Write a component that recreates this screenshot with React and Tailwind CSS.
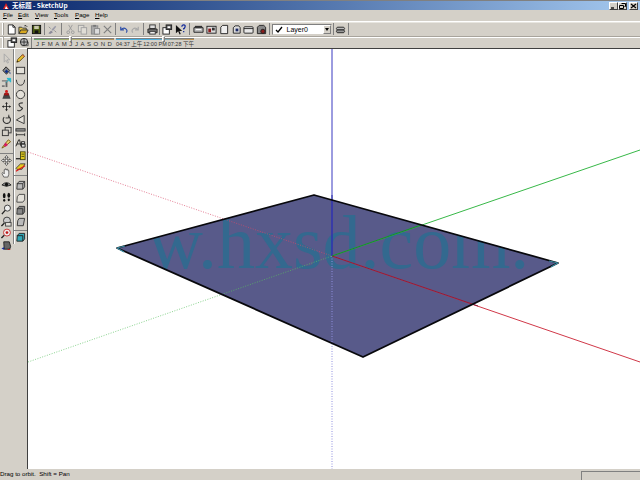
import React from 'react';

const I = ({ children }) => (
  <svg viewBox="0 0 12 12" className="w-[11px] h-[11px]" fill="none" strokeWidth="1">
    {children}
  </svg>
);

const icons = {
  // main toolbar
  doc: <><path d="M2.500 1h5l2.500 2.500v7.500h-7.500z" fill="#fff" stroke="#222" /><path d="M7.500 1v2.500h2.500" stroke="#222" /></>,
  open: <><path d="M1 10.500v-7h3l1 1h4v2" fill="#e8c84a" stroke="#333" /><path d="M1 10.500l2-4h8l-2 4z" fill="#d8a820" stroke="#333" /><path d="M7 2q2-1 3 1" stroke="#222" /></>,
  save: <><rect x="1.500" y="1.500" width="9" height="9" fill="#4a5a10" stroke="#111" /><rect x="3.500" y="2" width="5" height="3.500" fill="#c8c8a8" /><rect x="4" y="7" width="4" height="3" fill="#111" /></>,
  paint2: <><path d="M1.500 10l3-3 2 2-3 2z" fill="#8a8a98" /><path d="M5 6l4-4 1 1-3.500 4.500z" fill="#9a9aa8" /><path d="M2 3l2 2M8 7l2 2" stroke="#8a8a8a" /></>,
  cut: <><path d="M4 1l3.500 6M8 1l-3.500 6" stroke="#9a9a9a" /><circle cx="3.500" cy="9" r="1.500" stroke="#9a9a9a" /><circle cx="8.500" cy="9" r="1.500" stroke="#9a9a9a" /></>,
  copy: <><rect x="1.500" y="1.500" width="6" height="7" fill="#e0ddd6" stroke="#a0a0a0" /><rect x="4.500" y="4" width="6" height="7" fill="#e0ddd6" stroke="#a0a0a0" /></>,
  paste: <><rect x="1.500" y="2" width="7" height="9" fill="#a8a8a8" stroke="#888" /><rect x="5" y="5" width="5.500" height="6" fill="#ddd" stroke="#888" /><rect x="3.500" y="1" width="3" height="2" fill="#777" /></>,
  del: <path d="M2 2l8 8M10 2l-8 8" stroke="#808080" strokeWidth="1.300" />,
  undo: <path d="M3 3v3.500h3.500M3.200 6.300q3-3 5.300-1t.5 4" stroke="#3050a8" strokeWidth="1.300" />,
  redo: <path d="M9 3v3.500h-3.500M8.800 6.300q-3-3-5.300-1t-.5 4" stroke="#a8a8a8" strokeWidth="1.300" />,
  print: <><rect x="3" y="1" width="6" height="4" fill="#ddd" stroke="#333" /><path d="M1 5.500h10v4h-10z" fill="#777" stroke="#222" /><rect x="3" y="8" width="6" height="3" fill="#eee" stroke="#333" /></>,
  info: <><rect x="1" y="4" width="7" height="7" fill="#fff" stroke="#222" /><rect x="4.500" y="1" width="6" height="5" fill="#555" stroke="#222" /><rect x="6" y="2.500" width="3" height="2" fill="#fff" /></>,
  help: <><path d="M1 1v9l2.500-2 1.500 3.500 1.300-.5-1.500-3.500h3z" fill="#111" /><path d="M7.500 3q0-2 2-2t1.500 2-1.500 2v1M9.500 7.500v1.500" stroke="#10289a" strokeWidth="1.300" /></>,
  iso: <><path d="M1 4h10v5h-10z" fill="#bbb" stroke="#222" /><path d="M3 6h6" stroke="#fff" /><path d="M2 2h8v2h-8z" fill="#333" /></>,
  top: <><rect x="1" y="2.500" width="10" height="7.500" fill="#ddd" stroke="#222" /><rect x="2.500" y="5" width="3" height="4" fill="#8a1c1c" /><rect x="6.500" y="4" width="3" height="3" fill="#333" /></>,
  front: <path d="M3 10.500v-7l2-2h5.500v9z" fill="#eee" stroke="#222" />,
  right: <><path d="M2.500 10v-6l2-2h4l1.500 2v6z" fill="#ddd" stroke="#222" /><rect x="5" y="5" width="3" height="3" fill="#1c2a66" /></>,
  back: <><rect x="1" y="3" width="10" height="7" rx="1" fill="#e8e8e8" stroke="#222" /><path d="M1 5h10" stroke="#222" /></>,
  left: <><path d="M1.500 10.500v-7l2-2h5l2 2v7z" fill="#888" stroke="#222" /><circle cx="7.500" cy="8" r="2.300" fill="#8a1c1c" stroke="#222" /></>,
  layers: <><path d="M2.500 3.500h7l1 1.500-1 1.500h-7l-1-1.500z" fill="#bbb" stroke="#222" /><path d="M2.500 6.500h7l1 1.500-1 1.500h-7l-1-1.500z" fill="#999" stroke="#222" /></>,
  globe: <><path d="M3 9.500h7v-4l-1-1" stroke="#555" /><circle cx="5.500" cy="5.500" r="4" fill="#bbb" stroke="#222" /><path d="M5.500 1.500v8M1.500 5.500h8" stroke="#333" /></>,
  // left toolbar
  select: <path d="M3.500 1v9l2-2 1.500 3 1.200-.6-1.500-3h3z" fill="#d4d0c8" stroke="#a8a8a8" />,
  pencil: <><path d="M2 10l1-3 5.500-5.500 2 2-5.500 5.500z" fill="#e8c030" stroke="#6a5010" /><path d="M8 2l2 2" stroke="#d03050" /><path d="M2 10l1.500-.8-.7-.7z" fill="#111" /></>,
  bucket: <><path d="M2 6l3.500-4 4 4-3.500 4z" fill="#888" stroke="#222" /><path d="M4 7l2-2 2 2-2 2z" fill="#10308a" /><path d="M9.500 7q1.500 2 .5 3-1.500-1-.5-3" fill="#10308a" /></>,
  rect: <rect x="1.500" y="2.500" width="9" height="7" fill="#e4e1da" stroke="#333" />,
  push: <><path d="M1 3.500h7v1.500h-7zM1 9h3v2h-3z" fill="#777" /><path d="M6 5v6" stroke="#666" strokeWidth="2" /><path d="M5.500 6l4-4M6.500 1.500h4v4z" fill="#20b8d0" stroke="#20b8d0" /></>,
  arc: <path d="M1.500 3q.5 6 4.500 6t4.500-6" stroke="#333" />,
  eraser: <><path d="M1.500 10.500l1.500-4h6l1.500 4z" fill="#444" /><path d="M3.500 6.500a2.500 2.500 0 0 1 5 0z" fill="#c81818" stroke="#801010" /><circle cx="6" cy="2.500" r="1.500" fill="#d81818" /></>,
  circle: <circle cx="6" cy="6" r="4.500" fill="#e4e1da" stroke="#333" />,
  move: <path d="M6 1l1.500 2h-1v2.500h2.500v-1l2 1.500-2 1.500v-1h-2.500v2.500h1l-1.500 2-1.500-2h1v-2.500h-2.500v1l-2-1.500 2-1.500v1h2.500v-2.500h-1z" fill="#222" transform="translate(0 .1)" />,
  free: <path d="M8.500 2q-5 0-4 2.500t3 3-2 3q-1 .3-3-.5" stroke="#333" strokeWidth="1.200" />,
  rotate: <><path d="M3.500 3.500a4 4 0 1 0 4.500-.8" stroke="#333" strokeWidth="1.200" /><path d="M8.500 .8v3.500h-3.500" stroke="#333" /></>,
  polygon: <path d="M10 1.500v9l-8.500-4z" fill="#e4e1da" stroke="#333" />,
  offset: <><rect x="4.500" y="1.500" width="6.500" height="6" stroke="#333" /><rect x="1.500" y="4.500" width="6.500" height="6" fill="#d4d0c8" stroke="#333" /></>,
  tape: <><rect x="1" y="3" width="10" height="2.500" fill="#999" stroke="#333" /><path d="M1.500 8v3M10.500 8v3M1.500 9.500h9" stroke="#333" /></>,
  brush: <><path d="M1 11l2-3 5-6 2.500 2-6 5z" fill="#e8d070" stroke="#7a5a10" /><path d="M5 5l2.500 2.500L5 9.500 3 8z" fill="#d81860" /></>,
  text: <><path d="M1 9l3-7h1l1.500 7M2 6.500h4" stroke="#222" /><path d="M7 4h3.500v2.500h-3.500zM7 6.500h4v3.500h-4z" stroke="#222" fill="#ddd" /></>,
  key: <><path d="M1 9.500h5" stroke="#333" strokeWidth="1.500" /><rect x="6" y="2" width="5" height="8.500" fill="#e0c820" stroke="#4a4a10" /><path d="M7 4.500h3M7 7h3" stroke="#4a4a10" /></>,
  plane: <><path d="M1 7l5-5h5l-3.500 6h-5.500z" fill="#e8c820" stroke="#444" /><path d="M1 10l10-6" stroke="#d81818" strokeWidth="1.300" /></>,
  orbit: <path d="M6 .5l1.800 2.300h-1.200v2.600h2.600v-1.200l2.300 1.800-2.300 1.800v-1.200h-2.600v2.600h1.200l-1.800 2.300-1.800-2.300h1.200v-2.600h-2.600v1.200l-2.300-1.800 2.300-1.800v1.200h2.600v-2.600h-1.200z" fill="#fff" stroke="#222" strokeWidth=".7" />,
  hand: <path d="M3 11l-2-4 1-1 1.500 1.500v-4.500h1v-1h1v1h1v-.5h1v1.500h1v4l-1 3z" fill="#eee" stroke="#444" strokeWidth=".8" />,
  eye: <><path d="M1 6.500q5-5 10 0-5 3-10 0z" fill="#999" stroke="#222" /><circle cx="6" cy="6" r="1.800" fill="#111" /></>,
  viewA: <><path d="M2.500 4l2-2.500h6v6l-2 2.500h-6.500z" fill="#bbb" stroke="#333" /><path d="M2 4h6.500v6M8.500 4l2-2.500" stroke="#333" /></>,
  viewB: <path d="M2.500 4l2-2.500h6v6l-2 2.500h-6.500z" fill="#e4e1da" stroke="#444" />,
  viewC: <><path d="M2.500 4l2-2.500h6v6l-2 2.500h-6.500z" fill="#888" stroke="#333" /><path d="M2 4h6.500v6" stroke="#333" /></>,
  viewD: <><path d="M3 4l1.500-2.500h6l-1.500 8h-6.500z" fill="#bbb" stroke="#333" /></>,
  walk: <><ellipse cx="3.500" cy="4" rx="1.500" ry="2.800" fill="#111" /><ellipse cx="8.500" cy="3.500" rx="1.500" ry="2.800" fill="#111" /><ellipse cx="3.500" cy="9" rx="1.200" ry="1.500" fill="#111" /><ellipse cx="8.500" cy="8.500" rx="1.200" ry="1.500" fill="#111" /></>,
  zoom: <><circle cx="7" cy="4.500" r="3.300" fill="#eee" stroke="#333" /><path d="M4.500 7l-3.500 4" stroke="#222" strokeWidth="1.500" /></>,
  zoomW: <><circle cx="6.500" cy="5" r="3.800" fill="#ccc" stroke="#333" /><path d="M3.500 8l-3 3" stroke="#222" strokeWidth="1.500" /><rect x="5" y="7" width="6" height="4" fill="#e4e1da" stroke="#444" /></>,
  viewCyan: <><path d="M2.500 4l2-2.500h6v6l-2 2.500h-6.500z" fill="#30a8b8" stroke="#222" /><path d="M2 4h6.500v6" stroke="#222" /></>,
  zoomE: <><circle cx="6.500" cy="5" r="3.800" fill="#eee" stroke="#c83030" /><circle cx="6.500" cy="5" r="1.500" fill="#c01818" /><path d="M3.500 8l-3 3" stroke="#222" strokeWidth="1.500" /></>,
  prev: <><path d="M3 2h6l1.500 5-1 3h-6z" fill="#666" stroke="#222" /><path d="M.500 9l3-1v3z" fill="#10289a" /><path d="M8 9.500l3 1.500h-4z" fill="#c01818" /></>,
};

function Btn({ name, w = 'w-[12.5px]' }) {
  return (
    <div className={`${w} h-[12px] flex items-center justify-center shrink-0`}>
      <I>{icons[name]}</I>
    </div>
  );
}

const Sep = ({ className }) => <div className={`w-[2px] h-[12px] shrink-0 border-l border-[#808080] border-r-white ${className}`} />;
const Grip = () => <div className="w-[2px] h-[12px] ml-[2px] shrink-0 border-l border-white bg-[#a8a49c]" />;
const MenuItem = ({ first, rest, className }) => (
  <span className={className}>
    <span className="underline">{first}</span>
    {rest}
  </span>
);
const Thumb = ({ className }) => <div className={`absolute top-[-2px] w-[3px] h-[6px] bg-[#d4d0c8] border border-[#808080] border-t-white border-l-white ${className}`} />;

function WinBtn({ children, className }) {
  return (
    <div className={`w-[9px] h-[8px] bg-[#d4d0c8] border-t border-l border-white border-r border-b border-r-[#404040] border-b-[#404040] flex items-center justify-center shrink-0 ${className}`}>
      <svg viewBox="0 0 7 6" className="w-[7px] h-[6px]" fill="none" stroke="#000">{children}</svg>
    </div>
  );
}

function LeftTool({ name, className = 'h-[12.2px]' }) {
  return (
    <div className={`${className} w-[13px] flex items-center justify-center shrink-0`}>
      <I>{icons[name]}</I>
    </div>
  );
}

export default function App() {
  return (
    <div className="w-[640px] h-[480px] bg-[#d4d0c8] overflow-hidden flex flex-col text-black font-['Liberation_Sans',Arial,sans-serif]">
      {/* Title bar */}
      <div className="h-[10px] shrink-0 border-t border-[#808080] flex items-center bg-gradient-to-r from-[#0a246a] to-[#a6caf0]">
        <svg viewBox="0 0 8 8" className="w-[8px] h-[8px] ml-[2px] shrink-0">
          <path d="M1 7l3-6 3 6z" fill="#d82020" />
          <path d="M3 7l1-3 2 3z" fill="#fff" />
        </svg>
        <span className="ml-[2px] text-[6.500px] leading-none font-bold text-white whitespace-nowrap font-['Noto_Sans_CJK_SC','Liberation_Sans',sans-serif]">
          无标题 - SketchUp
        </span>
        <div className="ml-auto flex items-center mr-[2px]">
          <WinBtn><path d="M1 5h3" strokeWidth="1.300" /></WinBtn>
          <WinBtn><path d="M2.500 .5h4v3h-1M.5 2.500h4v3h-4z" /></WinBtn>
          <WinBtn className="ml-[2px]"><path d="M1 1l5 4M6 1l-5 4" strokeWidth="1.200" /></WinBtn>
        </div>
      </div>

      {/* Menu */}
      <div className="h-[11px] shrink-0 flex items-center text-[6.200px] leading-none pl-[3px]">
        <MenuItem first="F" rest="ile" className="w-[15px]" />
        <MenuItem first="E" rest="dit" className="w-[17px]" />
        <MenuItem first="V" rest="iew" className="w-[19px]" />
        <MenuItem first="T" rest="ools" className="w-[21px]" />
        <MenuItem first="P" rest="age" className="w-[20px]" />
        <MenuItem first="H" rest="elp" />
      </div>

      {/* Main toolbar */}
      <div className="h-[15px] shrink-0 border-t border-white flex items-center shadow-[inset_0_1px_0_#e8e6e0]">
        <Grip />
        <div className="w-[1px] shrink-0" />
        <Btn name="doc" /><Btn name="open" /><Btn name="save" />
        <Sep className="mx-[1px]" />
        <Btn name="paint2" />
        <Sep className="mx-[1.500px]" />
        <Btn name="cut" /><Btn name="copy" /><Btn name="paste" /><Btn name="del" />
        <Sep className="mx-[0.500px]" />
        <Btn name="undo" /><Btn name="redo" />
        <Sep className="mx-[1px]" />
        <Btn name="print" />
        <Sep className="mx-[0.500px]" />
        <Btn name="info" /><Btn name="help" />
        <Sep className="mx-[2px]" />
        <Btn name="iso" /><Btn name="top" /><Btn name="front" /><Btn name="right" /><Btn name="back" /><Btn name="left" />
        <Sep className="mx-[1px]" />
        <div className="w-[60px] h-[11px] shrink-0 bg-white border border-[#808080] border-r-[#d4d0c8] border-b-[#d4d0c8] flex items-center">
          <svg viewBox="0 0 8 7" className="w-[8px] h-[7px] ml-[2px] shrink-0" fill="none" stroke="#000" strokeWidth="1.300">
            <path d="M1 4l2 2 4-5" />
          </svg>
          <span className="ml-[4px] text-[7px] leading-none">Layer0</span>
          <div className="ml-auto w-[8px] h-[9px] bg-[#d4d0c8] border border-[#808080] border-t-white border-l-white flex items-center justify-center">
            <div className="w-0 h-0 border-x-[2px] border-x-transparent border-t-[3px] border-t-black" />
          </div>
        </div>
        <Sep className="ml-[1px]" />
        <Btn name="layers" />
        <Sep className="ml-[1px]" />
      </div>

      {/* Shadow toolbar */}
      <div className="h-[12px] shrink-0 border-t border-[#a8a49c] flex items-center shadow-[inset_0_1px_0_#ffffff]">
        <Grip />
        <div className="w-[2px] shrink-0" />
        <Btn name="info" w="w-[12px]" /><Btn name="globe" w="w-[12px]" />
        <Sep className="ml-[1px] mr-[1px]" />
        <div className="w-[80px] shrink-0 flex flex-col relative">
          <div className="h-[2px] bg-gradient-to-r from-[#68a868] via-[#b0b070] to-[#b89058] border-t border-[#808080]" />
          <Thumb className="left-[35px]" />
          <div className="flex justify-between px-[2px] text-[6px] leading-[8px] text-[#333]">
            {['J', 'F', 'M', 'A', 'M', 'J', 'J', 'A', 'S', 'O', 'N', 'D'].map((m, i) => <span key={i}>{m}</span>)}
          </div>
        </div>
        <div className="w-[78px] ml-[2px] shrink-0 flex flex-col relative">
          <div className="h-[2px] bg-gradient-to-r from-[#48b0e0] via-[#48b0e0] to-[#c89040] border-t border-[#808080]" />
          <Thumb className="left-[46px]" />
          <div className="flex justify-between text-[5.500px] leading-[8px] text-[#333] whitespace-nowrap font-['Liberation_Sans','Noto_Sans_CJK_SC',sans-serif]">
            <span>04:37 上午</span><span>12:00 PM</span><span>07:28 下午</span>
          </div>
        </div>
      </div>

      <div className="flex-1 flex min-h-0">
        {/* Left tools */}
        <div className="w-[27px] shrink-0 flex border-t border-white">
          <div className="w-[13px] shrink-0 flex flex-col pt-[3px]">
            <LeftTool name="select" /><LeftTool name="bucket" /><LeftTool name="push" /><LeftTool name="eraser" />
            <LeftTool name="move" /><LeftTool name="rotate" /><LeftTool name="offset" /><LeftTool name="brush" />
            <div className="h-[4px] shrink-0 border-b border-[#808080] mb-[1px]" />
            <LeftTool name="orbit" /><LeftTool name="hand" /><LeftTool name="eye" /><LeftTool name="walk" />
            <LeftTool name="zoom" /><LeftTool name="zoomW" /><LeftTool name="zoomE" /><LeftTool name="prev" />
          </div>
          <div className="w-[14px] shrink-0 self-start flex flex-col pt-[3px] border-l border-[#808080] shadow-[inset_1px_0_0_#ffffff]">
            <LeftTool name="pencil" /><LeftTool name="rect" /><LeftTool name="arc" /><LeftTool name="circle" />
            <LeftTool name="free" /><LeftTool name="polygon" /><LeftTool name="tape" /><LeftTool name="text" />
            <LeftTool name="key" /><LeftTool name="plane" />
            <div className="h-[5px] shrink-0 border-t border-[#808080] mt-[1px]" />
            <LeftTool name="viewA" /><LeftTool name="viewB" /><LeftTool name="viewC" /><LeftTool name="viewD" />
            <div className="h-[2px] shrink-0 border-b border-[#808080]" />
            <LeftTool name="viewCyan" className="h-[13px]" />
          </div>
        </div>

        {/* Canvas */}
        <div className="flex-1 bg-white border-l border-t border-[#404040] min-w-0">
          <svg viewBox="28 49 612 420" className="w-[612px] h-[420px] block" fill="none">
            <defs>
              <clipPath id="face"><path d="M117 248L314 195L558 263L363 357Z" /></clipPath>
            </defs>
            <path d="M117 248L314 195L558 263L363 357Z" fill="#585a8a" />
            <text x="148" y="268" clipPath="url(#face)" fontFamily="Liberation Serif" fontSize="76" fill="#33698f">
              w.hxsd.com.
            </text>
            <path d="M28 152L332 256" stroke="#d84868" strokeDasharray="1 1.500" strokeOpacity=".7" />
            <path d="M28 362L332 256" stroke="#58c060" strokeDasharray="1 1.500" strokeOpacity=".7" />
            <path d="M332 256V469" stroke="#9090e0" strokeDasharray="1 1.500" />
            <path d="M332 48V256" stroke="#3838c0" />
            <path d="M332 256L640 362" stroke="#d03848" />
            <path d="M332 256L640 150" stroke="#38b848" />
            <path d="M332 195V256" stroke="#2a2ea8" />
            <path d="M332 256L478 306" stroke="#882040" />
            <path d="M332 256L421 225" stroke="#188a30" />
            <path d="M117 248L314 195L558 263L363 357Z" stroke="#08080c" strokeWidth="1.800" strokeLinejoin="round" />
            <path d="M117 248L125 246M117 248L124 252M558 263L549 261M558 263L551 267" stroke="#3a8aa0" strokeWidth="1.200" />
          </svg>
        </div>
      </div>

      {/* Status bar */}
      <div className="h-[11px] shrink-0 flex items-center text-[6.200px] leading-none">
        <span className="whitespace-pre">Drag to orbit.  Shift = Pan</span>
        <div className="ml-auto w-[59px] h-[9px] self-end border-l border-t border-[#808080]" />
      </div>
    </div>
  );
}
